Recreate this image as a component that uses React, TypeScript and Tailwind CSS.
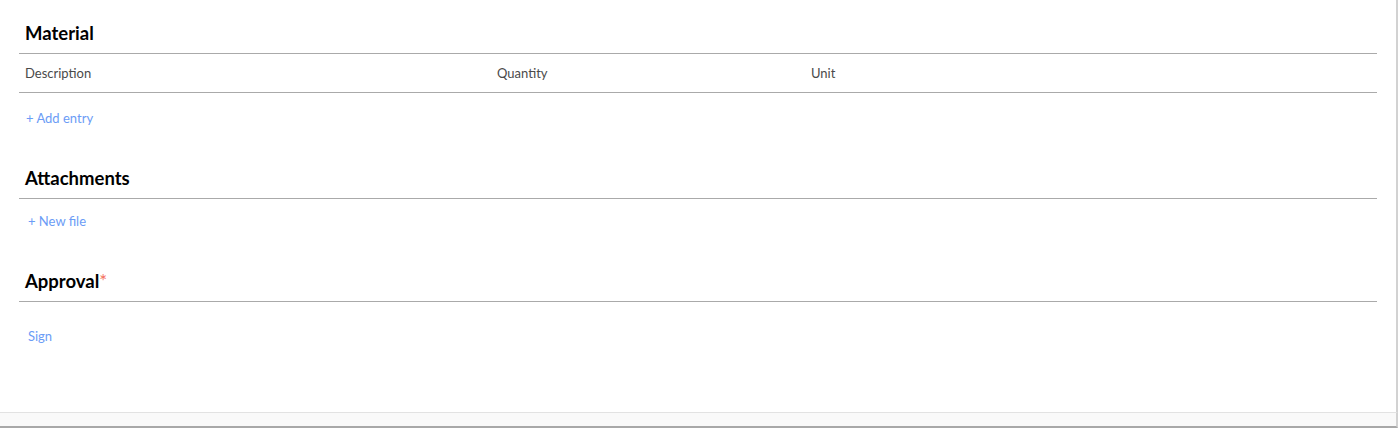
import React from "react";

const font = { fontFamily: "Lato, 'Open Sans', sans-serif" };

function SectionTitle({ title, required }: { title: string; required?: boolean }) {
    return (
        <div className="border-b border-[#aaaaaa] px-[6px] pb-[9px]">
            <h2 className="text-[18.5px] font-bold text-black leading-[22px]">
                {title}
                {required && <span className="text-[#f4725f] font-normal">*</span>}
            </h2>
        </div>
    );
}

export default function App() {
    const columns = ["Description", "Quantity", "Unit"];

    return (
        <div className="w-[1398px] h-[428px] bg-white flex flex-col" style={font}>
            <div className="flex-1 flex border-r-2 border-[#d2d2d2]">
                <div className="flex-1 px-[19px]">
                    {/* MATERIAL */}
                    <section className="pt-[22px]">
                        <SectionTitle title="Material" />
                        <div className="grid grid-cols-[472px_314px_1fr] h-[39px] pt-[1px] items-center border-b border-[#aaaaaa] px-[6px] text-[13px] text-[#4a4a4a]">
                            {columns.map((c) => (
                                <span key={c}>{c}</span>
                            ))}
                        </div>
                        <div className="px-[7px] pt-[12px]">
                            <button className="text-[13px] leading-[16px] text-[#6b9cf6]">+ Add entry</button>
                        </div>
                    </section>

                    {/* ATTACHMENTS */}
                    <section className="pt-[38px]">
                        <SectionTitle title="Attachments" />
                        <div className="px-[9px] pt-[9px]">
                            <button className="text-[13px] leading-[16px] text-[#6b9cf6]">+ New file</button>
                        </div>
                    </section>

                    {/* APPROVAL */}
                    <section className="pt-[38px]">
                        <SectionTitle title="Approval" required />
                        <div className="px-[9px] pt-[21px]">
                            <button className="text-[13px] leading-[16px] text-[#6b9cf6]">Sign</button>
                        </div>
                    </section>
                </div>
            </div>
            <div className="h-[16px] border-t border-[#e2e2e2] bg-[#f9f9f9] border-b-2 border-b-[#a8a8a8] border-r-2 border-r-[#d2d2d2]" />
        </div>
    );
}
